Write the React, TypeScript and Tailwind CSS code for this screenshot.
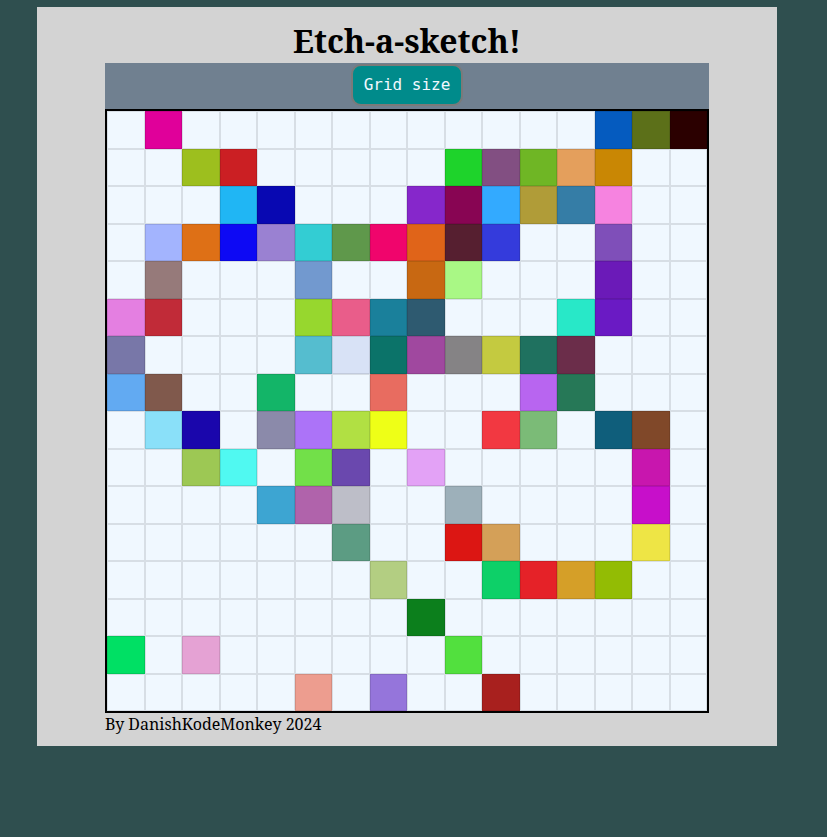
const COLORS: Record<string, string> = {
  "0-1": "#e0009a", "0-13": "#055bbf", "0-14": "#5c7019", "0-15": "#2b0000",
  "1-2": "#9dbf1e", "1-3": "#cb1f23", "1-9": "#1ed32b", "1-10": "#824f82", "1-11": "#6fb625", "1-12": "#e49f5c", "1-13": "#c98704",
  "2-3": "#20b6f4", "2-4": "#0808b2", "2-8": "#8627cb", "2-9": "#880553", "2-10": "#33aaff", "2-11": "#b09c38", "2-12": "#357da6", "2-13": "#f683e0",
  "3-1": "#a3b4fe", "3-2": "#de7016", "3-3": "#0d09f4", "3-4": "#9a81d2", "3-5": "#33cdd3", "3-6": "#5f984b", "3-7": "#f0056c", "3-8": "#e06419", "3-9": "#561f30", "3-10": "#343bdc", "3-13": "#7f4fb9",
  "4-1": "#967a7a", "4-5": "#7299cf", "4-8": "#c86812", "4-9": "#a9f885", "4-13": "#6b1ab8",
  "5-0": "#e47fe1", "5-1": "#c12b38", "5-5": "#97d72e", "5-6": "#e95d8a", "5-7": "#1a809b", "5-8": "#2e5a70", "5-12": "#28e8c8", "5-13": "#6a1ac4",
  "6-0": "#7877a8", "6-5": "#55bdcf", "6-6": "#d8e2f6", "6-7": "#0b7369", "6-8": "#a0489f", "6-9": "#858385", "6-10": "#c4ca40", "6-11": "#1f715f", "6-12": "#6b2d4a",
  "7-0": "#62aaf2", "7-1": "#80594c", "7-4": "#13b568", "7-7": "#e86c60", "7-11": "#b865f0", "7-12": "#267857",
  "8-1": "#8ae0f9", "8-2": "#1a06ac", "8-4": "#8b8aaa", "8-5": "#ac73f8", "8-6": "#b1e043", "8-7": "#eeff17", "8-10": "#f23841", "8-11": "#7bbb77", "8-13": "#0f5e7b", "8-14": "#804829",
  "9-2": "#9dc854", "9-3": "#50f9f1", "9-5": "#72e049", "9-6": "#6a48ae", "9-8": "#e3a2f6", "9-14": "#c816ae",
  "10-4": "#3da5d2", "10-5": "#b063ab", "10-6": "#bdbec8", "10-9": "#9db0ba", "10-14": "#c70fca",
  "11-6": "#5c9c83", "11-9": "#dc1613", "11-10": "#d4a058", "11-14": "#eee545",
  "12-7": "#b3ce82", "12-10": "#0dd068", "12-11": "#e52228", "12-12": "#d59f28", "12-13": "#93bc04",
  "13-8": "#0c7f1c",
  "14-0": "#00e064", "14-2": "#e5a2d4", "14-9": "#52e03e",
  "15-5": "#ed9d8f", "15-7": "#9575db", "15-10": "#a8201e",
};

const serif = "font-['Noto_Serif','DejaVu_Serif',serif]";

export default function App() {
  const cells = [];
  for (let r = 0; r < 16; r++) {
    for (let c = 0; c < 16; c++) {
      const color = COLORS[`${r}-${c}`];
      cells.push(
        <div
          key={`${r}-${c}`}
          className="border border-black/10 bg-[#f0f8ff]"
          style={color ? { backgroundColor: color } : undefined}
        />
      );
    }
  }

  return (
    <div className="min-h-[837px] bg-[#2f4f4f] pt-[7px] pl-[37px]">
      <div className={`w-[740px] h-[739px] bg-[#d3d3d3] ${serif}`}>
        <h1 className="h-[56px] pt-[12px] text-center text-[32px] font-bold leading-[44px] text-black">
          Etch-a-sketch!
        </h1>
        <div className="w-[604px] mx-auto">
          <div className="h-[46px] bg-[#708090] flex justify-center items-start pt-[1px]">
            <button className="w-[112px] h-[42px] shrink-0 flex items-center justify-center rounded-[10px] border-2 border-solid border-[#7a7a7a] bg-[#008b8b] text-[#f0f8ff] text-[16px] leading-none font-['DejaVu_Sans_Mono',monospace]">
              Grid size
            </button>
          </div>
          <div className="w-[604px] h-[604px] border-2 border-black grid grid-cols-16 grid-rows-16">
            {cells}
          </div>
          <p className="text-[16px] leading-[22px] text-black">By DanishKodeMonkey 2024</p>
        </div>
      </div>
    </div>
  );
}
